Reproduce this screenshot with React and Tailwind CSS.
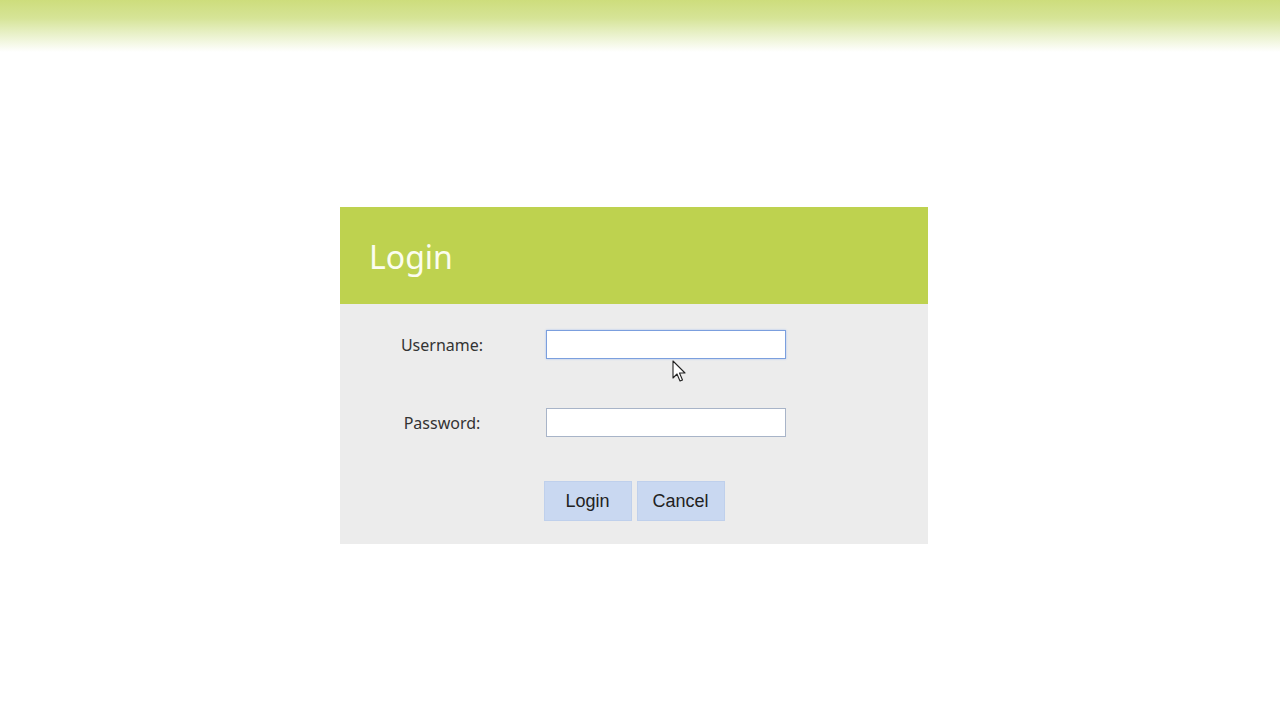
export default function App() {
  return (
    <div className="relative w-[1280px] h-[720px] bg-white overflow-hidden" style={{ fontFamily: '"Noto Sans", "Open Sans", sans-serif' }}>
      {/* top banner fade */}
      <div className="h-[52px] bg-gradient-to-b from-[#cddd7c] via-[#d6e497] via-35% to-white" />

      <div className="flex pl-[340px] pt-[155px]">
        <div className="w-[588px]">
          <div className="h-[97px] bg-[#bed24f] flex items-center pl-[29px]">
            <h1 className="text-[32px] text-[#fbfdf0] leading-none mt-[2px]">Login</h1>
          </div>
          <div className="bg-[#ececec] pt-[26px] pb-[23px]">
            <div className="flex items-center pl-[42px]">
              <label className="w-[120px] text-center text-[16px] text-[#333]">Username:</label>
              <input
                type="text"
                className="ml-[44px] w-[240px] h-[29px] bg-white border border-[#7b9fde] outline-none shadow-[0_0_2px_#a9c2ee]"
              />
            </div>
            <div className="flex items-center pl-[42px] mt-[49px]">
              <label className="w-[120px] text-center text-[16px] text-[#333]">Password:</label>
              <input
                type="password"
                className="ml-[44px] w-[240px] h-[29px] bg-white border border-[#a8b4c8] outline-none"
              />
            </div>
            <div className="flex justify-center gap-[5px] mt-[44px]" style={{ fontFamily: '"Liberation Sans", Arial, sans-serif' }}>
              <button className="w-[88px] h-[40px] bg-[#c9d8f1] border border-[#bfd0ec] text-[18px] text-[#222]">Login</button>
              <button className="w-[88px] h-[40px] bg-[#c9d8f1] border border-[#bfd0ec] text-[18px] text-[#222]">Cancel</button>
            </div>
          </div>
        </div>
      </div>

      {/* mouse pointer */}
      <svg className="absolute left-[672px] top-[360px]" width="16" height="24" viewBox="0 0 16 24">
        <path d="M1 1 L1 18 L5 14 L8 21 L10.5 20 L7.5 13 L13 13 Z" fill="#fff" stroke="#222" strokeWidth="1.1" strokeLinejoin="round" />
      </svg>
    </div>
  );
}
